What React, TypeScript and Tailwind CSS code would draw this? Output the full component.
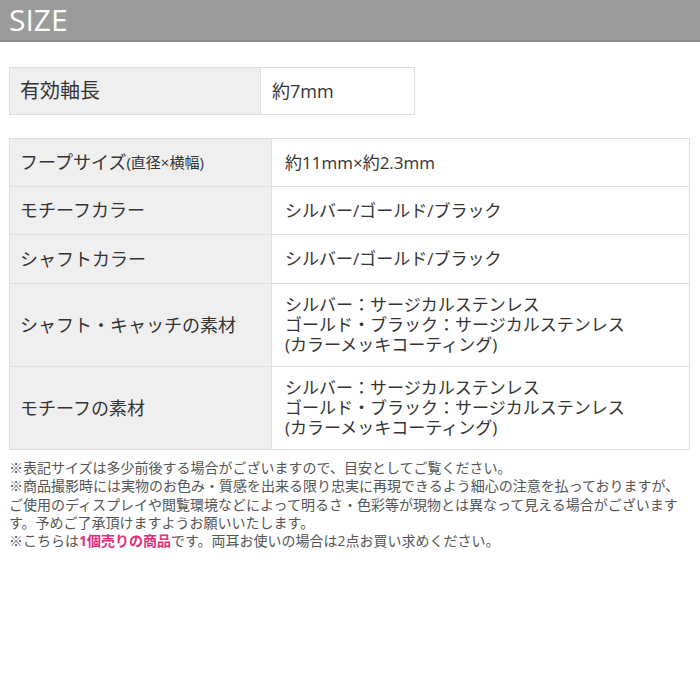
import React from "react";

const font = { fontFamily: '"Open Sans", "Noto Sans CJK JP", sans-serif' };

const rows: { label: React.ReactNode; value: string[]; h: string }[] = [
  {
    label: (
      <>
        フープサイズ<span className="text-[15px]">(直径×横幅)</span>
      </>
    ),
    value: ["約11mm×約2.3mm"],
    h: "h-[47px]",
  },
  { label: "モチーフカラー", value: ["シルバー/ゴールド/ブラック"], h: "h-[47px]" },
  { label: "シャフトカラー", value: ["シルバー/ゴールド/ブラック"], h: "h-[48px]" },
  {
    label: "シャフト・キャッチの素材",
    value: ["シルバー：サージカルステンレス", "ゴールド・ブラック：サージカルステンレス", "(カラーメッキコーティング)"],
    h: "h-[82px]",
  },
  {
    label: "モチーフの素材",
    value: ["シルバー：サージカルステンレス", "ゴールド・ブラック：サージカルステンレス", "(カラーメッキコーティング)"],
    h: "h-[82px]",
  },
];

export default function App() {
  return (
    <div className="w-[700px] h-[700px] bg-white overflow-hidden text-[#333]" style={font}>
      <div className="h-[42px] bg-[#9b9b9b] border-b-2 border-[#8c8c8c] flex items-center pl-[9px]">
        <span className="text-white text-[30px] leading-[38px]">SIZE</span>
      </div>

      <div className="mt-[25px] ml-[9px] w-[406px] grid grid-cols-[250px_153px] gap-px p-px bg-[#dedede]">
        <div className="h-[46px] bg-[#efefef] flex items-center pl-[10px] text-[20px]">有効軸長</div>
        <div className="h-[46px] bg-white flex items-center pl-[11px] text-[18px]">約7mm</div>
      </div>

      <div className="mt-[23px] ml-[9px] w-[681px] grid grid-cols-[261px_417px] gap-px p-px bg-[#dedede]">
        {rows.map((r, i) => (
          <React.Fragment key={i}>
            <div className={`${r.h} bg-[#efefef] flex items-center pl-[10px] text-[18px]`}>{r.label}</div>
            <div className={`${r.h} bg-white flex flex-col justify-center pl-[13px] text-[17px] leading-[20px]`}>
              {r.value.map((v, j) => (
                <div key={j}>{v}</div>
              ))}
            </div>
          </React.Fragment>
        ))}
      </div>

      <div className="mt-[9px] ml-[9px] text-[14px] leading-[18.3px] text-[#555] whitespace-nowrap">
        <div>※表記サイズは多少前後する場合がございますので、目安としてご覧ください。</div>
        <div>※商品撮影時には実物のお色み・質感を出来る限り忠実に再現できるよう細心の注意を払っておりますが、</div>
        <div>ご使用のディスプレイや閲覧環境などによって明るさ・色彩等が現物とは異なって見える場合がございます</div>
        <div>す。予めご了承頂けますようお願いいたします。</div>
        <div>
          ※こちらは<span className="font-bold text-[#e0307a]">1個売りの商品</span>です。両耳お使いの場合は2点お買い求めください。
        </div>
      </div>
    </div>
  );
}
